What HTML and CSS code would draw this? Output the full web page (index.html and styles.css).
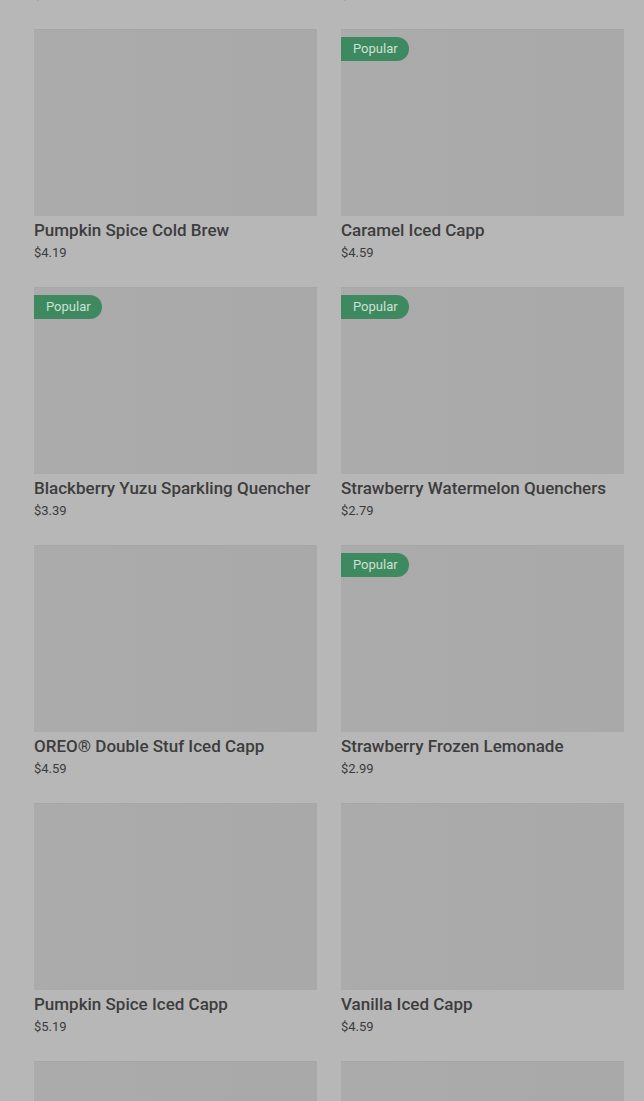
FILE: index.html
```html
<!DOCTYPE html>
<html lang="en">
<head>
  <meta charset="UTF-8">
  <meta name="viewport" content="width=device-width, initial-scale=1.0">
  <title>Menu</title>
  <link rel="stylesheet" href="styles.css">
</head>
<body>
  <div class="backdrop">
    <div class="grid">
      <div class="card">
        <div class="thumb"></div>
        <div class="name">Iced Coffee</div>
        <div class="price">$3.19</div>
      </div>
      <div class="card">
        <div class="thumb"></div>
        <div class="name">Iced Latte</div>
        <div class="price">$4.29</div>
      </div>

      <div class="card">
        <div class="thumb"></div>
        <div class="name">Pumpkin Spice Cold Brew</div>
        <div class="price">$4.19</div>
      </div>
      <div class="card">
        <div class="thumb"><span class="badge">Popular</span></div>
        <div class="name">Caramel Iced Capp</div>
        <div class="price">$4.59</div>
      </div>

      <div class="card">
        <div class="thumb"><span class="badge">Popular</span></div>
        <div class="name">Blackberry Yuzu Sparkling Quencher</div>
        <div class="price">$3.39</div>
      </div>
      <div class="card">
        <div class="thumb"><span class="badge">Popular</span></div>
        <div class="name">Strawberry Watermelon Quenchers</div>
        <div class="price">$2.79</div>
      </div>

      <div class="card">
        <div class="thumb"></div>
        <div class="name">OREO® Double Stuf Iced Capp</div>
        <div class="price">$4.59</div>
      </div>
      <div class="card">
        <div class="thumb"><span class="badge">Popular</span></div>
        <div class="name">Strawberry Frozen Lemonade</div>
        <div class="price">$2.99</div>
      </div>

      <div class="card">
        <div class="thumb"></div>
        <div class="name">Pumpkin Spice Iced Capp</div>
        <div class="price">$5.19</div>
      </div>
      <div class="card">
        <div class="thumb"></div>
        <div class="name">Vanilla Iced Capp</div>
        <div class="price">$4.59</div>
      </div>

      <div class="card">
        <div class="thumb"></div>
        <div class="name">Mocha Iced Capp</div>
        <div class="price">$4.59</div>
      </div>
      <div class="card">
        <div class="thumb"></div>
        <div class="name">Original Iced Capp</div>
        <div class="price">$4.19</div>
      </div>
    </div>
  </div>
</body>
</html>
```
FILE: styles.css
```css
html,
body {
  margin: 0;
  padding: 0;
  height: 100%;
  overflow: hidden;
}

body {
  font-family: Roboto, "Liberation Sans", sans-serif;
  background-color: #b7b7b7;
  color: #333;
}

.backdrop {
  padding: 0 20px 0 34px;
}

.grid {
  display: grid;
  grid-template-columns: repeat(2, 283px);
  column-gap: 24px;
  row-gap: 24px;
  margin-top: -229px;
}

.card {
  display: flex;
  flex-direction: column;
}

.thumb {
  position: relative;
  height: 187px;
  background: linear-gradient(90deg, #ababab 0%, #aaaaaa 45%, #a9a9a9 100%);
  border-top: 1px solid #a6a6a6;
  box-sizing: border-box;
  margin-bottom: 4px;
}

.badge {
  position: absolute;
  top: 7px;
  left: 0;
  height: 24px;
  line-height: 24px;
  padding: 0 12px 0 12px;
  width: 44px;
  font-size: 13px;
  color: #cfe0d4;
  background-color: #3e8a60;
  border-radius: 0 12px 12px 0;
}

.name {
  font-size: 17px;
  font-weight: 500;
  line-height: 20px;
  color: #3d3d3d;
  white-space: nowrap;
}

.price {
  font-size: 13px;
  line-height: 20px;
  margin-top: 3px;
  color: #3c3c3c;
}
```
